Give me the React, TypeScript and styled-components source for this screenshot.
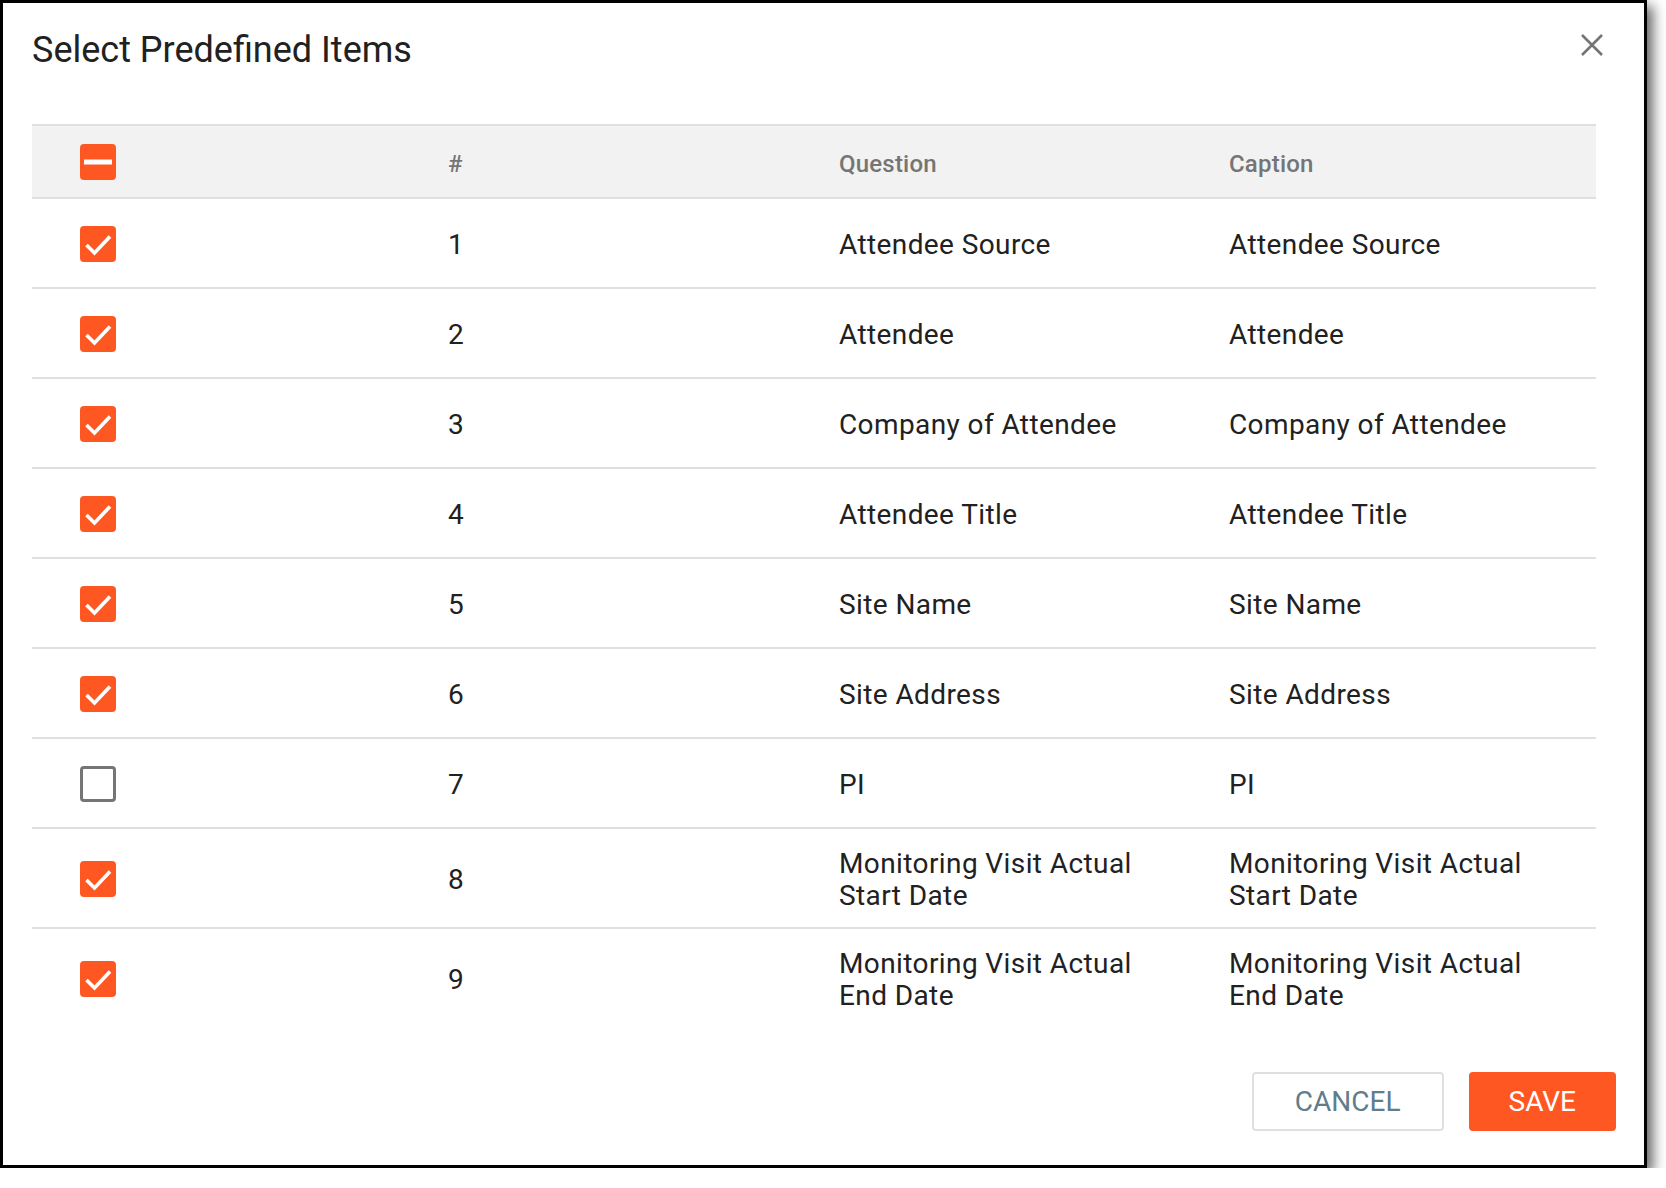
import React from "react";
import styled, { createGlobalStyle } from "styled-components";

type CheckState = "checked" | "unchecked" | "indeterminate";

interface Item {
  id: number;
  question: string;
  caption: string;
  checked: boolean;
}

const items: Item[] = [
  { id: 1, question: "Attendee Source", caption: "Attendee Source", checked: true },
  { id: 2, question: "Attendee", caption: "Attendee", checked: true },
  { id: 3, question: "Company of Attendee", caption: "Company of Attendee", checked: true },
  { id: 4, question: "Attendee Title", caption: "Attendee Title", checked: true },
  { id: 5, question: "Site Name", caption: "Site Name", checked: true },
  { id: 6, question: "Site Address", caption: "Site Address", checked: true },
  { id: 7, question: "PI", caption: "PI", checked: false },
  {
    id: 8,
    question: "Monitoring Visit Actual Start Date",
    caption: "Monitoring Visit Actual Start Date",
    checked: true,
  },
  {
    id: 9,
    question: "Monitoring Visit Actual End Date",
    caption: "Monitoring Visit Actual End Date",
    checked: true,
  },
];

const ORANGE = "#ff5722";

const GlobalStyle = createGlobalStyle`
  html, body {
    margin: 0;
    padding: 0;
    background: #ffffff;
  }
  body {
    font-family: Roboto, "Liberation Sans", Arial, sans-serif;
    color: #212121;
  }
  * { box-sizing: border-box; }
`;

const Dialog = styled.div`
  width: 1647px;
  height: 1168px;
  background: #ffffff;
  border: 3px solid #000000;
  box-shadow: 6px 6px 12px rgba(0, 0, 0, 0.6);
  display: flex;
  flex-direction: column;
`;

const TitleBar = styled.div`
  height: 121px;
  display: flex;
  align-items: flex-start;
  justify-content: space-between;
  padding: 25px 41px 0 29px;
`;

const Title = styled.h2`
  margin: 0;
  font-size: 36px;
  line-height: 44px;
  font-weight: 400;
  color: #212121;
`;

const CloseButton = styled.button`
  margin-top: 6px;
  width: 22px;
  height: 22px;
  padding: 0;
  border: none;
  background: none;
  cursor: pointer;
  display: flex;
`;

const Table = styled.div`
  margin: 0 48px 0 29px;
  display: flex;
  flex-direction: column;
`;

const GridRow = styled.div<{ $head?: boolean; $last?: boolean }>`
  display: grid;
  grid-template-columns: 416px 391px 390px 1fr;
  align-items: center;
  min-height: ${({ $head }) => ($head ? "75px" : "90px")};
  padding: ${({ $head }) => ($head ? "0" : "17px 0 15px")};
  background: ${({ $head }) => ($head ? "#f2f2f2" : "#ffffff")};
  border-top: ${({ $head }) => ($head ? "2px solid #e0e0e0" : "none")};
  border-bottom: ${({ $last }) => ($last ? "none" : "2px solid #e0e0e0")};
`;

const CheckCell = styled.div`
  padding-left: 48px;
  display: flex;
  align-items: center;
`;

const Cell = styled.div<{ $head?: boolean }>`
  padding: ${({ $head }) => ($head ? "4px 48px 0 0" : "2px 48px 0 0")};
  font-size: ${({ $head }) => ($head ? "24px" : "28px")};
  font-weight: ${({ $head }) => ($head ? 500 : 400)};
  color: ${({ $head }) => ($head ? "#757575" : "#212121")};
  line-height: 32px;
  letter-spacing: ${({ $head }) => ($head ? "0.2px" : "0.4px")};
`;

const Box = styled.span<{ $state: CheckState }>`
  width: 36px;
  height: 36px;
  border-radius: 4px;
  display: inline-flex;
  align-items: center;
  justify-content: center;
  background: ${({ $state }) => ($state === "unchecked" ? "#ffffff" : ORANGE)};
  border: ${({ $state }) => ($state === "unchecked" ? "3px solid #757575" : "none")};
`;

const Footer = styled.div`
  margin-top: 45px;
  display: flex;
  justify-content: flex-end;
  gap: 25px;
  padding-right: 28px;
`;

const Button = styled.button<{ $primary?: boolean }>`
  height: 59px;
  padding: ${({ $primary }) => ($primary ? "0 38px" : "0 41px")};
  border-radius: 4px;
  border: 2px solid ${({ $primary }) => ($primary ? ORANGE : "#e0e0e0")};
  background: ${({ $primary }) => ($primary ? ORANGE : "#ffffff")};
  color: ${({ $primary }) => ($primary ? "#ffffff" : "#607d8b")};
  font-family: Roboto, "Liberation Sans", Arial, sans-serif;
  font-size: 28px;
  font-weight: 400;
  text-transform: uppercase;
  cursor: pointer;
`;

const Checkbox: React.FC<{ state: CheckState }> = ({ state }) => (
  <Box $state={state}>
    {state === "checked" && (
      <svg width="36" height="36" viewBox="0 0 36 36">
        <polyline
          points="6.5,19 14.5,27 30,10.5"
          fill="none"
          stroke="#ffffff"
          strokeWidth="3.6"
        />
      </svg>
    )}
    {state === "indeterminate" && (
      <svg width="36" height="36" viewBox="0 0 36 36">
        <rect x="4" y="15.5" width="28" height="5" fill="#ffffff" />
      </svg>
    )}
  </Box>
);

const App: React.FC = () => {
  const checkedCount = items.filter((i) => i.checked).length;
  const headState: CheckState =
    checkedCount === items.length ? "checked" : checkedCount === 0 ? "unchecked" : "indeterminate";

  return (
    <>
      <GlobalStyle />
      <Dialog>
        <TitleBar>
          <Title>Select Predefined Items</Title>
          <CloseButton aria-label="Close">
            <svg width="22" height="22" viewBox="0 0 22 22">
              <path d="M1 1L21 21M21 1L1 21" stroke="#757575" strokeWidth="2.6" />
            </svg>
          </CloseButton>
        </TitleBar>
        <Table>
          <GridRow $head>
            <CheckCell>
              <Checkbox state={headState} />
            </CheckCell>
            <Cell $head>#</Cell>
            <Cell $head>Question</Cell>
            <Cell $head>Caption</Cell>
          </GridRow>
          {items.map((item, i) => (
            <GridRow key={item.id} $last={i === items.length - 1}>
              <CheckCell>
                <Checkbox state={item.checked ? "checked" : "unchecked"} />
              </CheckCell>
              <Cell>{item.id}</Cell>
              <Cell>{item.question}</Cell>
              <Cell>{item.caption}</Cell>
            </GridRow>
          ))}
        </Table>
        <Footer>
          <Button>Cancel</Button>
          <Button $primary>Save</Button>
        </Footer>
      </Dialog>
    </>
  );
};

export default App;
